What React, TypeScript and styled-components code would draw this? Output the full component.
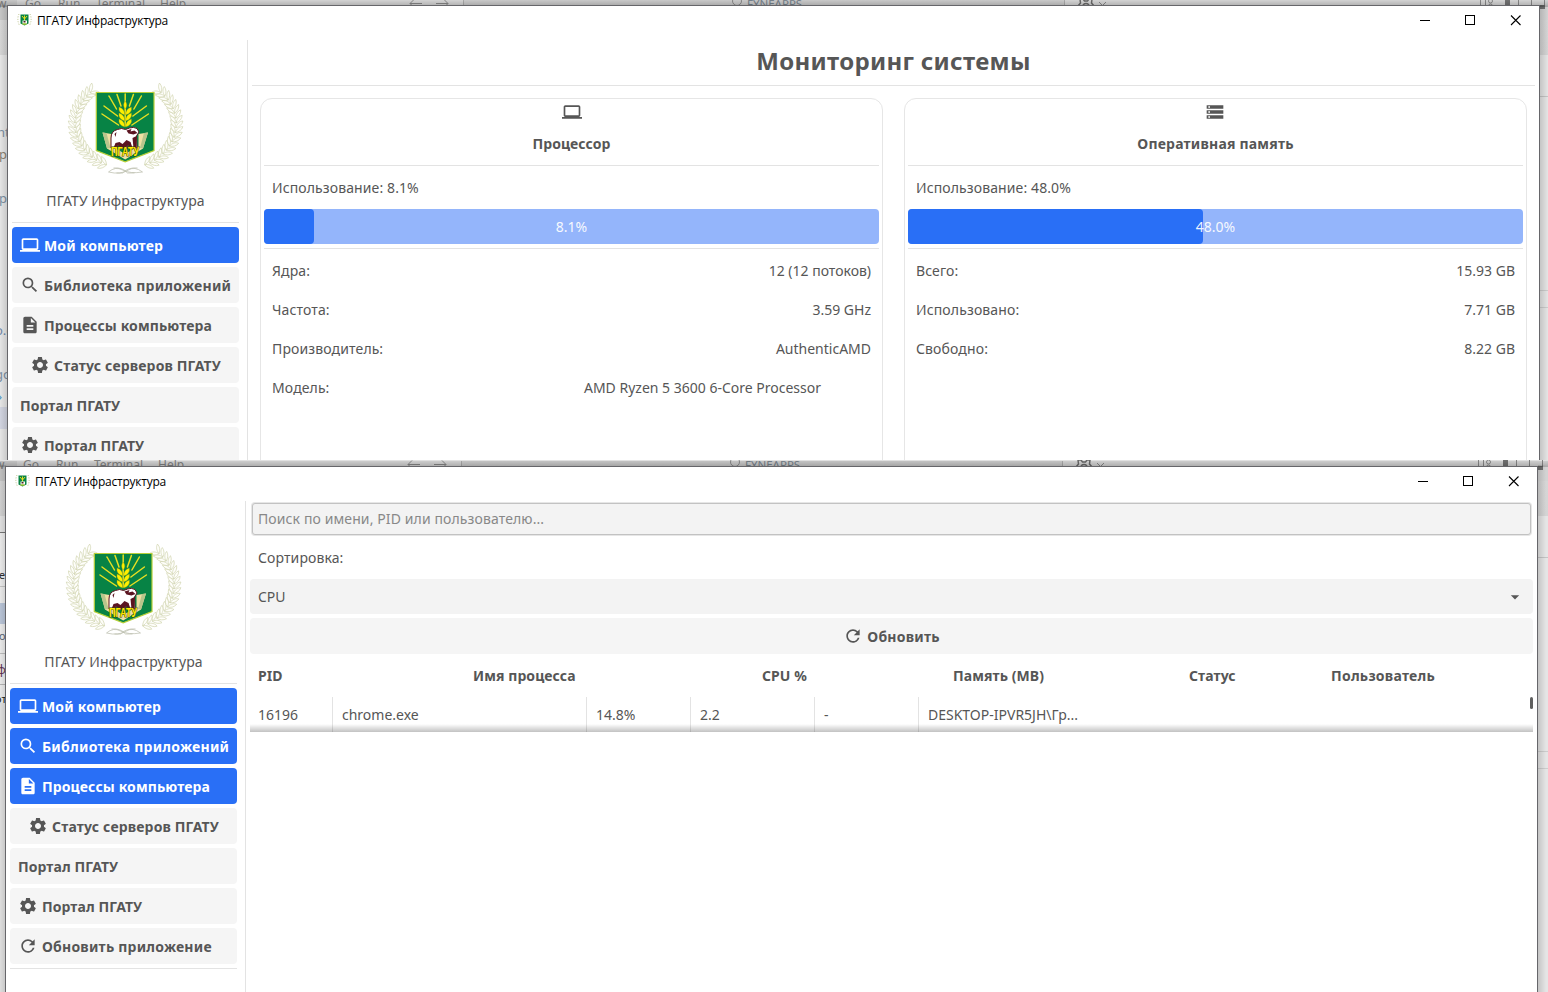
import React from "react";
import styled, { createGlobalStyle, css } from "styled-components";
import {
  MdArrowDropDown,
  MdComputer,
  MdDescription,
  MdRefresh,
  MdSearch,
  MdSettings,
  MdStorage,
} from "react-icons/md";
import type { IconType } from "react-icons";

const GlobalStyle = createGlobalStyle`
  * { box-sizing: border-box; }
  body {
    margin: 0;
    background: #e2e2e2;
    color: #565656;
    font: 14px/19px "Noto Sans", "Open Sans", sans-serif;
    overflow: hidden;
  }
`;

const Page = styled.div`
  display: flex;
  flex-direction: column;
  width: 1548px;
  height: 992px;
`;

/* ---------- desktop behind the windows ---------- */

const Desktop = styled.section<{ $height: number; $left: number; $top: number }>`
  position: relative;
  height: ${(p) => p.$height}px;
  padding: ${(p) => `${p.$top}px 0 0 ${p.$left}px`};
  overflow: hidden;
  background: #e4e4e4;
`;

const Backdrop = styled.div<{ $dx: number; $dy: number }>`
  position: absolute;
  left: ${(p) => p.$dx}px;
  top: ${(p) => p.$dy}px;
  width: 1560px;
  height: 540px;
  background: linear-gradient(#d3d3d3 20px, #d6d6d6 20px, #d4d4d4 55px, #e5e5e5 55px);
`;

const TopShade = styled.div`
  position: absolute;
  inset: 0 0 auto 0;
  height: 7px;
  background: linear-gradient(rgba(0, 0, 0, 0) 0, rgba(0, 0, 0, 0.2) 100%);
`;

const SideShade = styled.div<{ $x: number; $flip?: boolean }>`
  position: absolute;
  left: ${(p) => p.$x}px;
  top: 5px;
  width: 8px;
  height: 540px;
  background: linear-gradient(
    ${(p) => (p.$flip ? "to left" : "to right")},
    rgba(0, 0, 0, 0),
    rgba(0, 0, 0, 0.14)
  );
`;

const Fragment = styled.span<{ $x: number; $y: number; $color?: string; $size?: number }>`
  position: absolute;
  left: ${(p) => p.$x}px;
  top: ${(p) => p.$y}px;
  white-space: nowrap;
  font-size: ${(p) => p.$size ?? 12}px;
  line-height: 14px;
  color: ${(p) => p.$color ?? "#808080"};
`;

const Block = styled.span<{ $x: number; $y: number; $w: number; $h: number; $color: string }>`
  position: absolute;
  left: ${(p) => p.$x}px;
  top: ${(p) => p.$y}px;
  width: ${(p) => p.$w}px;
  height: ${(p) => p.$h}px;
  background: ${(p) => p.$color};
`;

const BackdropArt = styled.svg`
  position: absolute;
  left: 0;
  top: -6px;
`;

/* ---------- window ---------- */

const Window = styled.div`
  position: relative;
  display: flex;
  flex-direction: column;
  width: 1533px;
  height: 540px;
  border: 1px solid #66666a;
  background: #fff;
`;

const TitleBar = styled.header`
  display: flex;
  align-items: center;
  height: 30px;
  padding: 0 18px 0 9px;
  flex: none;
`;

const TitleText = styled.span`
  margin-left: 4px;
  flex: 1;
  color: #000;
  font: 12px/16px "Open Sans", "Noto Sans", sans-serif;
  letter-spacing: -0.23px;
  white-space: nowrap;
`;

const WindowButtons = styled.svg`
  display: block;
  margin-bottom: 1px;
`;

const Body = styled.div`
  display: flex;
  flex: 1;
  margin-top: 4px;
`;

const Sidebar = styled.nav`
  display: flex;
  flex-direction: column;
  gap: 4px;
  width: 240px;
  padding: 0 8px 0 4px;
  border-right: 1px solid #e3e3e3;
`;

const EmblemBox = styled.div`
  display: flex;
  justify-content: center;
  height: 139px;
  padding: 42px 0 0;
`;

const Separator = styled.hr`
  flex: none;
  width: 100%;
  height: 1px;
  margin: 0;
  border: 0;
  background: #e3e3e3;
`;

const Label = styled.div<{ $align?: "left" | "center"; $bold?: boolean; $track?: number }>`
  flex: none;
  height: 35px;
  padding: 8px;
  text-align: ${(p) => p.$align ?? "left"};
  font-weight: ${(p) => (p.$bold ? 700 : 400)};
  letter-spacing: ${(p) => p.$track ?? 0.11}px;
  white-space: nowrap;
`;

const Button = styled.button<{ $primary?: boolean; $centered?: boolean; $track?: number }>`
  display: flex;
  flex: none;
  align-items: center;
  justify-content: ${(p) => (p.$centered ? "center" : "flex-start")};
  gap: 4px;
  height: 36px;
  padding: 0 8px;
  border: 0;
  border-radius: 4px;
  font: 700 14px/19px "Noto Sans", sans-serif;
  letter-spacing: ${(p) => p.$track ?? 0.15}px;
  white-space: nowrap;
  color: #565656;
  background: #f5f5f5;
  ${(p) =>
    p.$primary &&
    css`
      color: #fff;
      background: #296ff6;
    `}
  svg {
    flex: none;
  }
`;

const ButtonText = styled.span`
  height: 18px;
`;

/* ---------- monitoring view ---------- */

const Main = styled.main`
  display: flex;
  flex-direction: column;
  flex: 1;
  min-width: 0;
  padding: 0 4px;
`;

const Heading = styled.h1`
  flex: none;
  height: 45px;
  margin: 0;
  padding-top: 4px;
  text-align: center;
  font-size: 24px;
  line-height: 33px;
  font-weight: 700;
  letter-spacing: 0.31px;
`;

const Cards = styled.div`
  display: grid;
  grid-template-columns: 623px 623px;
  gap: 21px;
  flex: 1;
  padding: 12px 8px 0;
`;

const Card = styled.section`
  display: flex;
  flex-direction: column;
  gap: 4px;
  padding: 3px;
  border: 1px solid #e6e6e6;
  border-radius: 12px;
`;

const CardIcon = styled.div<{ $nudge: number }>`
  display: flex;
  justify-content: center;
  height: 20px;
  padding-right: ${(p) => p.$nudge}px;
`;

const Bar = styled.div`
  position: relative;
  flex: none;
  height: 35px;
  border-radius: 4px;
  background: #94b5fb;
  color: #fff;
  text-align: center;
  line-height: 36px;
`;

const BarFill = styled.div`
  position: absolute;
  inset: 0 auto 0 0;
  border-radius: 4px;
  background: #296ff6;
`;

const BarText = styled.span`
  position: relative;
  opacity: 0.92;
`;

const Row = styled.div<{ $inset?: number }>`
  display: flex;
  justify-content: space-between;
  height: 35px;
  padding: 8px ${(p) => 8 + (p.$inset ?? 0)}px 8px 8px;
  white-space: nowrap;
`;

const RowName = styled.span`
  letter-spacing: 0.13px;
`;

/* ---------- process view ---------- */

const Processes = styled.main`
  display: flex;
  flex-direction: column;
  gap: 4px;
  width: 1291px;
  padding: 0 4px;
`;

const Search = styled.div`
  height: 35px;
  padding: 2px;
  flex: none;
`;

const SearchField = styled.div`
  height: 32px;
  padding: 5px 5px 0;
  border: 1px solid #c2c2c2;
  border-radius: 3px;
  background: #f3f3f3;
  box-shadow: 0 0 0 1px #e6e6e6;
  color: #888;
  line-height: 19px;
  letter-spacing: 0.11px;
`;

const Select = styled.div`
  display: flex;
  justify-content: space-between;
  align-items: center;
  height: 35px;
  padding: 0 8px;
  flex: none;
  border-radius: 4px;
  background: #f3f3f3;
`;

const Columns = styled.div`
  display: grid;
  grid-template-columns: 215px 289px 191px 236px 142px 1fr;
  height: 35px;
  padding: 8px;
  font-weight: 700;
  white-space: nowrap;
  letter-spacing: 0.08px;
  span:last-child {
    letter-spacing: 0.26px;
  }
`;

const Table = styled.div`
  position: relative;
  display: grid;
  grid-template-columns: 82px 254px 104px 124px 104px 1fr;
  height: 35px;
`;

const Cell = styled.div`
  padding: 8px 9px;
  white-space: nowrap;
  & + & {
    border-left: 1px solid #e3e3e3;
  }
  &:first-child {
    padding-left: 8px;
  }
`;

const TableShadow = styled.div`
  position: absolute;
  inset: auto 0 0 0;
  height: 8px;
  background: linear-gradient(rgba(0, 0, 0, 0), rgba(0, 0, 0, 0.24));
`;

const ScrollThumb = styled.div`
  position: absolute;
  top: 0;
  right: 0;
  width: 3px;
  height: 12px;
  border-radius: 1.5px;
  background: #606060;
`;

/* ---------- emblem ---------- */

const leaves = Array.from({ length: 19 }, (_, i) => {
  const t = ((-112 - i * 6.3) * Math.PI) / 180;
  return {
    x: 125 + 50.5 * Math.cos(t),
    y: 124 - 44 * Math.sin(t),
    a: (Math.atan2(44 * Math.cos(t), 50.5 * Math.sin(t)) * 180) / Math.PI,
  };
});

const Branch = () => (
  <g fill="#fefefa" stroke="#c9cda2" strokeWidth="0.55">
    {leaves.map((l, i) => (
      <g key={i} transform={`translate(${l.x} ${l.y}) rotate(${l.a})`}>
        <path d="M0 0C1.500 -3.500 4 -5.800 7.500 -6.200C7 -3 4 -0.500 0 0Z" />
        <path d="M0 0C1.500 3.500 4 5.800 7.500 6.200C7 3 4 0.500 0 0Z" />
      </g>
    ))}
  </g>
);

const rays = [
  [108.5, 96, 116, 109],
  [103.5, 106, 117, 116],
  [101.5, 114, 118, 125],
  [116.5, 94.5, 120.5, 106],
];

const Shield = () => (
  <g>
    <path d="M95.800 92.500H153.500V150.500L124.700 161.800L95.800 150.500Z" fill="#078345" stroke="#b7cf37" strokeWidth="1.2" />
    <path d="M102 132.500L111 134V146L124.700 154L138 146V134L147.500 132.500L142.500 148.500L124.700 159.500L106.500 148.500Z" fill="#efe0a4" />
    <path d="M102 132.500L106 133L110 148L106.500 148.500ZM147.500 132.500L143.500 133L139.500 148L142.500 148.500Z" fill="#b9c58c" />
    <g stroke="#e8df22" strokeWidth="1.5" strokeLinecap="round">
      {rays.map(([a, b, c, d]) => (
        <g key={a}>
          <path d={`M${a} ${b}L${c} ${d}`} />
          <path d={`M${249.4 - a} ${b}L${249.4 - c} ${d}`} />
        </g>
      ))}
      <path d="M124.700 94V126" />
    </g>
    <g fill="#fff000" stroke="#8a9a12" strokeWidth="0.4">
      <path d="M124.700 101Q121.500 105 124.700 109Q127.900 105 124.700 101Z" />
      {[107, 113, 119].map((y) => (
        <g key={y}>
          <path d={`M124.200 ${y + 8}Q117.500 ${y + 6} 118.500 ${y}Q124.500 ${y + 2} 124.200 ${y + 8}Z`} />
          <path d={`M125.200 ${y + 8}Q131.900 ${y + 6} 130.900 ${y}Q124.900 ${y + 2} 125.200 ${y + 8}Z`} />
        </g>
      ))}
    </g>
    <path
      d="M110.500 148V138Q110.500 131 117 129.500Q121 127.500 125 129.500L129 128Q133 126.500 136.500 128.500L138.500 132L136 136L136.500 148H131L129 142L126.500 148H121L119.500 143L116 148Z"
      fill="#fff"
      stroke="#5b1420"
      strokeWidth="1"
    />
    <path
      d="M113 148L115 143L119 142L122 144L126 140L130 142L132 148H130L128 145L125 148H120L118 145L115 148ZM126 130.500L131 129L130 131.500L134 130.500L137 133L133 134.500L128 133.500ZM132 138L136 136V148H133ZM114 134L116 132L115 137Z"
      fill="#5b1420"
    />
    <text
      x="110.500"
      y="155.500"
      textLength="28"
      lengthAdjust="spacingAndGlyphs"
      fontFamily="Liberation Sans, sans-serif"
      fontWeight="700"
      fontSize="12"
      fill="#ffee00"
      stroke="#3d3a08"
      strokeWidth="1.1"
      paintOrder="stroke"
    >
      ПГАТУ
    </text>
  </g>
);

const Emblem = () => (
  <svg width="120" height="94" viewBox="65.500 82 120 94">
    <Branch />
    <g transform="translate(250.200 0) scale(-1 1)">
      <Branch />
    </g>
    <g fill="none" stroke="#b9bcaa" strokeWidth="0.7">
      <path d="M108 172Q115 166 122 170Q130 174 142 172Q134 166 128 170Q120 175 108 172" />
      <path d="M113 168Q122 167 127 173H134M137 168Q128 167 122 173H116" />
    </g>
    <Shield />
  </svg>
);

const TinyEmblem = () => (
  <svg width="16" height="16" viewBox="0.500 0.500 16 16">
    <path d="M2.500 1.500Q0 7 3 13M13.500 1.500Q16 7 13 13" fill="none" stroke="#a9b36a" strokeWidth="0.8" strokeDasharray="1 1.500" />
    <path d="M4 2H12V11L8 13L4 11Z" fill="#078345" />
    <path d="M5.500 3.500L8 6.500L10.500 3.500M8 3V8" fill="none" stroke="#e8df22" />
    <path d="M6 8H10.500V11H6Z" fill="#fff" />
    <path d="M7 8.500H9V10H7Z" fill="#4a2020" />
    <path d="M6 11.500H10" stroke="#e8df22" />
  </svg>
);

/* ---------- composition ---------- */

type Scrap = { text: string; x: number; y: number; color?: string; size?: number };

const upperScraps: Scrap[] = [
  { text: "nt.", x: -3, y: 125, color: "#7b8ea0", size: 13 },
  { text: "pr", x: -1, y: 147, color: "#8a7f70", size: 13 },
  { text: "pr", x: -1, y: 191, color: "#7b8ea0", size: 13 },
  { text: "o.g", x: -5, y: 323, color: "#6f87a5", size: 13 },
  { text: "go", x: -5, y: 367, color: "#7b8ea0", size: 13 },
  { text: "›", x: -2, y: 389, color: "#4b8fc0", size: 13 },
];

const lowerScraps: Scrap[] = [
  { text: "е.", x: -1, y: 108, color: "#303030", size: 11 },
  { text: "о", x: -1, y: 169, color: "#606878", size: 11 },
  { text: "ф", x: -3, y: 203, color: "#603050", size: 12 },
  { text: "от", x: -5, y: 232, color: "#202020", size: 11 },
];

function Behind({ dx, dy, scraps, lower }: { dx: number; dy: number; scraps: Scrap[]; lower?: boolean }) {
  return (
    <>
      <Backdrop $dx={dx} $dy={dy}>
        <Block $x={-dx} $y={0} $w={17} $h={20} $color="#c6c6c6" />
        <Fragment $x={-3} $y={-3}>w</Fragment>
        <Fragment $x={25} $y={-3}>Go</Fragment>
        <Fragment $x={58} $y={-3}>Run</Fragment>
        <Fragment $x={96} $y={-3}>Terminal</Fragment>
        <Fragment $x={160} $y={-3}>Help</Fragment>
        <Block $x={463} $y={0} $w={602} $h={8} $color="#c9c9c9" />
        <Block $x={463} $y={0} $w={1} $h={8} $color="#a8a8a8" />
        <Block $x={1064} $y={0} $w={1} $h={8} $color="#a8a8a8" />
        <Fragment $x={747} $y={-3} $color="#75808a" $size={11.5}>FYNEAPPS</Fragment>
        <BackdropArt width="1560" height="20" fill="none" stroke="#858585">
          <path d="M410 9.500H422M410 9.500L414 5.500M410 9.500L414 13.500M436 9.500H448M448 9.500L444 5.500M448 9.500L444 13.500" />
          <circle cx="737" cy="7" r="4.500" />
          <path d="M1099 8L1102.500 11.500L1106 8" />
          <path d="M1078 12L1080.500 9L1080 5H1083L1084.500 7H1087.500L1089 5H1092L1091.500 9L1094 12" strokeWidth="1.500" stroke="#686868" />
          <circle cx="1086" cy="12.500" r="3" strokeWidth="1.500" stroke="#686868" />
          <path d="M1480.500 4V16M1485.500 4V16M1518.500 4V16M1531.500 4V11" />
          <circle cx="1490.500" cy="7" r="2" />
          <circle cx="1490.500" cy="12" r="2" />
          <path d="M1507.500 4V16" strokeWidth="5" stroke="#707070" />
          <path d="M1544.500 4V11" />
          <path d="M1531 13H1545" strokeWidth="4" stroke="#707070" />
        </BackdropArt>
        <Block $x={1540} $y={96} $w={20} $h={1} $color="#c4c4c4" />
        <Block $x={1540} $y={290} $w={20} $h={1} $color="#cccccc" />
        <Block $x={1540} $y={307} $w={20} $h={1} $color="#cccccc" />
      </Backdrop>
      {lower ? (
        <>
          <Block $x={0} $y={72} $w={6} $h={1} $color="#777777" />
          <Block $x={0} $y={73} $w={6} $h={170} $color="#f0f0f0" />
          <Block $x={0} $y={126} $w={6} $h={1} $color="#c8c8c8" />
          <Block $x={0} $y={143} $w={6} $h={21} $color="#bdc9dc" />
          <Block $x={0} $y={193} $w={6} $h={1} $color="#c0c0c0" />
          <Block $x={0} $y={224} $w={6} $h={1} $color="#b8b8b8" />
        </>
      ) : (
        <Block $x={0} $y={407} $w={8} $h={22} $color="#d0d3df" />
      )}
      {scraps.map((s) => (
        <Fragment key={s.y} $x={s.x} $y={s.y} $color={s.color} $size={s.size}>
          {s.text}
        </Fragment>
      ))}
      <TopShade />
      <SideShade $x={dx} />
      <SideShade $x={dx + 1540} $flip />
    </>
  );
}

type NavItem = { text: string; icon?: IconType; centered?: boolean; track?: number };

const navItems: NavItem[] = [
  { text: "Мой компьютер", icon: MdComputer, track: 0.17 },
  { text: "Библиотека приложений", icon: MdSearch, track: 0.25 },
  { text: "Процессы компьютера", icon: MdDescription, track: 0.11 },
  { text: "Статус серверов ПГАТУ", icon: MdSettings, centered: true, track: 0.15 },
  { text: "Портал ПГАТУ", track: 0.08 },
  { text: "Портал ПГАТУ", icon: MdSettings, track: 0.08 },
];

const updateItem: NavItem = { text: "Обновить приложение", icon: MdRefresh, track: 0.22 };

function AppWindow({ selected, items, children }: { selected: number; items: NavItem[]; children: React.ReactNode }) {
  return (
    <Window>
      <TitleBar>
        <TinyEmblem />
        <TitleText>ПГАТУ Инфраструктура</TitleText>
        <WindowButtons width="101" height="11" fill="none" stroke="#000" shapeRendering="crispEdges">
          <path d="M0 5.500H10" />
          <rect x="45.500" y="0.500" width="9" height="9" />
          <path d="M91 0.500L100.500 10M100.500 0.500L91 10" shapeRendering="auto" strokeWidth="1.100" />
        </WindowButtons>
      </TitleBar>
      <Body>
        <Sidebar>
          <EmblemBox>
            <Emblem />
          </EmblemBox>
          <Label $align="center">ПГАТУ Инфраструктура</Label>
          <Separator />
          {items.map(({ text, icon: Icon, centered, track }, i) => (
            <Button key={i} $primary={i < selected} $centered={centered} $track={track}>
              {Icon && <Icon size={20} />}
              <ButtonText>{text}</ButtonText>
            </Button>
          ))}
          <Separator />
        </Sidebar>
        {children}
      </Body>
    </Window>
  );
}

type Metric = { name: string; value: string; inset?: number };

type MetricCardProps = {
  title: string;
  track: number;
  icon: IconType;
  iconNudge?: number;
  load: number;
  metrics: Metric[];
};

function MetricCard({ title, track, icon: Icon, iconNudge = 0, load, metrics }: MetricCardProps) {
  const percent = `${load.toFixed(1)}%`;
  return (
    <Card>
      <CardIcon $nudge={iconNudge}>
        <Icon size={20} />
      </CardIcon>
      <Label $align="center" $bold $track={track}>{title}</Label>
      <Separator />
      <Label>Использование: {percent}</Label>
      <Bar>
        <BarFill style={{ width: percent }} />
        <BarText>{percent}</BarText>
      </Bar>
      <Separator />
      {metrics.map((m) => (
        <Row key={m.name} $inset={m.inset}>
          <RowName>{m.name}</RowName>
          <span>{m.value}</span>
        </Row>
      ))}
    </Card>
  );
}

export default function App() {
  return (
    <Page>
      <GlobalStyle />
      <Desktop $height={460} $left={7} $top={5}>
        <Behind dx={0} dy={0} scraps={upperScraps} />
        <AppWindow selected={1} items={navItems}>
          <Main>
            <Heading>Мониторинг системы</Heading>
            <Separator />
            <Cards>
              <MetricCard
                title="Процессор"
                track={0.04}
                icon={MdComputer}
                load={8.1}
                metrics={[
                  { name: "Ядра:", value: "12 (12 потоков)" },
                  { name: "Частота:", value: "3.59 GHz" },
                  { name: "Производитель:", value: "AuthenticAMD" },
                  { name: "Модель:", value: "AMD Ryzen 5 3600 6-Core Processor", inset: 50 },
                ]}
              />
              <MetricCard
                title="Оперативная память"
                track={0.2}
                icon={MdStorage}
                iconNudge={1}
                load={48}
                metrics={[
                  { name: "Всего:", value: "15.93 GB" },
                  { name: "Использовано:", value: "7.71 GB" },
                  { name: "Свободно:", value: "8.22 GB" },
                ]}
              />
            </Cards>
          </Main>
        </AppWindow>
      </Desktop>
      <Desktop $height={532} $left={5} $top={6}>
        <Behind dx={-2} dy={1} scraps={lowerScraps} lower />
        <AppWindow selected={3} items={[...navItems, updateItem]}>
          <Processes>
            <Search>
              <SearchField>Поиск по имени, PID или пользователю...</SearchField>
            </Search>
            <Label>Сортировка:</Label>
            <Select>
              CPU
              <MdArrowDropDown size={20} />
            </Select>
            <Button $centered $track={0.22}>
              <MdRefresh size={20} />
              <ButtonText>Обновить</ButtonText>
            </Button>
            <Columns>
              <span>PID</span>
              <span>Имя процесса</span>
              <span>CPU %</span>
              <span>Память (MB)</span>
              <span>Статус</span>
              <span>Пользователь</span>
            </Columns>
            <Table>
              <Cell>16196</Cell>
              <Cell>chrome.exe</Cell>
              <Cell>14.8%</Cell>
              <Cell>2.2</Cell>
              <Cell>-</Cell>
              <Cell>DESKTOP-IPVR5JH\Гр...</Cell>
              <TableShadow />
              <ScrollThumb />
            </Table>
          </Processes>
        </AppWindow>
      </Desktop>
    </Page>
  );
}
